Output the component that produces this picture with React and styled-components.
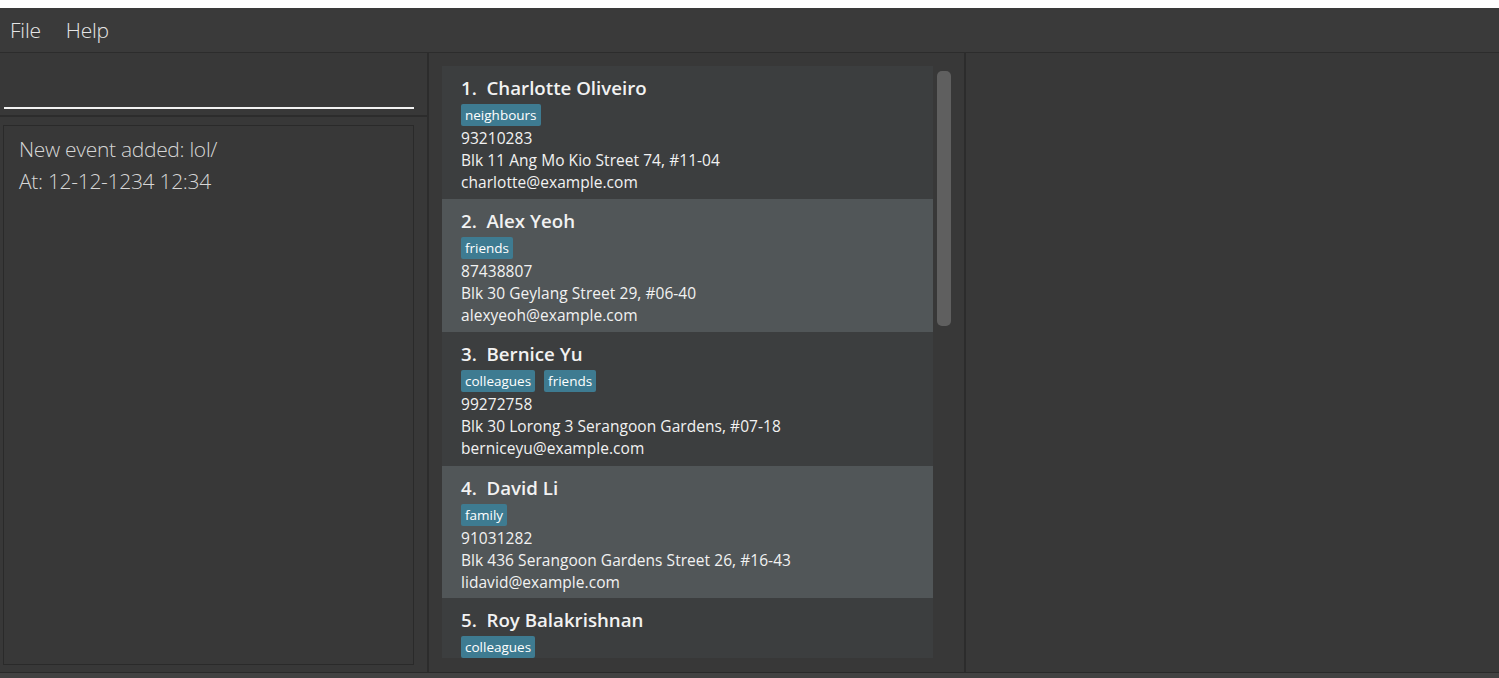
import React from "react";
import styled, { createGlobalStyle } from "styled-components";

const Global = createGlobalStyle`
  html, body { margin: 0; padding: 0; background: #ffffff; }
  body { padding-top: 8px; font-family: "Open Sans", "Noto Sans", sans-serif; overflow: hidden; }
  * { box-sizing: border-box; }
`;

const Window = styled.div`
  height: 670px;
  display: flex;
  flex-direction: column;
  background: #383838;
`;

const MenuBar = styled.div`
  height: 45px;
  display: flex;
  align-items: center;
  gap: 25px;
  padding-left: 10px;
  border-bottom: 1px solid #2c2c2c;
  background: #3a3a3a;
`;

const MenuItem = styled.span`
  font-family: "Open Sans", sans-serif;
  font-weight: 300;
  font-size: 21px;
  color: #e6e6e6;
  letter-spacing: -0.2px;
`;

const Main = styled.div`
  flex: 1;
  display: flex;
  min-height: 0;
  border-bottom: 1px solid #2a2a2a;
`;

const LeftColumn = styled.div`
  width: 427px;
  display: flex;
  flex-direction: column;
`;

const CommandArea = styled.div`
  height: 62px;
  padding: 0 13px 6px 4px;
  display: flex;
  align-items: flex-end;
`;

const CommandInput = styled.div`
  flex: 1;
  height: 1px;
  border-bottom: 2px solid #f2f2f2;
`;

const HDivider = styled.div`
  height: 2px;
  background: #2c2c2c;
`;

const ResultArea = styled.div`
  flex: 1;
  padding: 8px 13px 7px 3px;
  display: flex;
`;

const ResultBox = styled.div`
  flex: 1;
  border: 1px solid #2a2a2a;
  padding: 7px 15px;
  font-family: "Open Sans", sans-serif;
  font-weight: 300;
  font-size: 21px;
  line-height: 32px;
  color: #d6d6d6;
  letter-spacing: -0.3px;
`;

const VDivider = styled.div`
  width: 2px;
  background: #2c2c2c;
`;

const MiddleColumn = styled.div`
  width: 535px;
  padding: 13px 13px 14px 13px;
  display: flex;
`;

const ListView = styled.div`
  flex: 1;
  display: flex;
  gap: 4px;
  overflow: hidden;
`;

const Cards = styled.div`
  width: 491px;
  display: flex;
  flex-direction: column;
  overflow: hidden;
  background: #3c3e3f;
`;

const Card = styled.div`
  flex-shrink: 0;
  height: ${(p) => p.$h}px;
  padding: 10px 19px 0;
  background: ${(p) => (p.$even ? "#515658" : "#3c3e3f")};
  color: #f2f2f2;
  font-family: "Open Sans", sans-serif;
`;

const Name = styled.div`
  font-size: 18.7px;
  font-weight: 600;
  line-height: 24px;
  white-space: pre;
  letter-spacing: 0;
`;

const Tags = styled.div`
  display: flex;
  gap: 9px;
  margin-top: 4px;
  margin-bottom: 1px;
`;

const Tag = styled.span`
  background: #3e7b91;
  border-radius: 2px;
  height: 22px;
  padding: 0 4px;
  font-size: 13.5px;
  line-height: 22px;
  color: #ffffff;
`;

const Field = styled.div`
  font-size: 15.5px;
  line-height: 22px;
  letter-spacing: 0.05px;
`;

const ScrollTrack = styled.div`
  width: 14px;
  padding-top: 5px;
`;

const ScrollThumb = styled.div`
  width: 14px;
  height: 255px;
  border-radius: 5px;
  background: #5f5f5f;
`;

const RightColumn = styled.div`
  flex: 1;
  background: #383838;
`;

const StatusBar = styled.div`
  height: 5px;
  background: #424242;
`;

const heights = [133, 133, 134, 132, 133];

const persons = [
  { name: "Charlotte Oliveiro", tags: ["neighbours"], phone: "93210283", address: "Blk 11 Ang Mo Kio Street 74, #11-04", email: "charlotte@example.com" },
  { name: "Alex Yeoh", tags: ["friends"], phone: "87438807", address: "Blk 30 Geylang Street 29, #06-40", email: "alexyeoh@example.com" },
  { name: "Bernice Yu", tags: ["colleagues", "friends"], phone: "99272758", address: "Blk 30 Lorong 3 Serangoon Gardens, #07-18", email: "berniceyu@example.com" },
  { name: "David Li", tags: ["family"], phone: "91031282", address: "Blk 436 Serangoon Gardens Street 26, #16-43", email: "lidavid@example.com" },
  { name: "Roy Balakrishnan", tags: ["colleagues"], phone: "92624417", address: "Blk 45 Aljunied Street 85, #11-31", email: "royb@example.com" },
];

export default function App() {
  return (
    <>
      <Global />
      <Window>
        <MenuBar>
          <MenuItem>File</MenuItem>
          <MenuItem>Help</MenuItem>
        </MenuBar>
        <Main>
          <LeftColumn>
            <CommandArea>
              <CommandInput />
            </CommandArea>
            <HDivider />
            <ResultArea>
              <ResultBox>
                <div>New event added: lol/</div>
                <div>At: 12-12-1234 12:34</div>
              </ResultBox>
            </ResultArea>
          </LeftColumn>
          <VDivider />
          <MiddleColumn>
            <ListView>
              <Cards>
                {persons.map((p, i) => (
                  <Card key={p.name} $even={i % 2 === 1} $h={heights[i]}>
                    <Name>{`${i + 1}.  ${p.name}`}</Name>
                    <Tags>
                      {p.tags.map((t) => (
                        <Tag key={t}>{t}</Tag>
                      ))}
                    </Tags>
                    <Field>{p.phone}</Field>
                    <Field>{p.address}</Field>
                    <Field>{p.email}</Field>
                  </Card>
                ))}
              </Cards>
              <ScrollTrack>
                <ScrollThumb />
              </ScrollTrack>
            </ListView>
          </MiddleColumn>
          <VDivider />
          <RightColumn />
        </Main>
        <StatusBar />
      </Window>
    </>
  );
}
